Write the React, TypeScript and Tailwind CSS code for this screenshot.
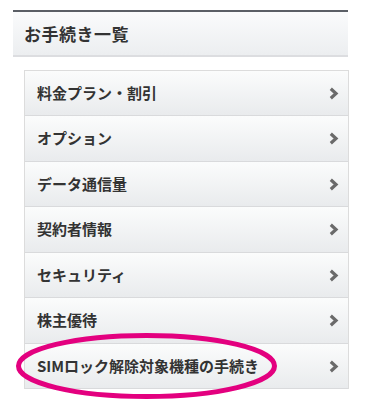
const items = [
  { label: "料金プラン・割引", h: "h-[45px]" },
  { label: "オプション", h: "h-[46px]" },
  { label: "データ通信量", h: "h-[45px]" },
  { label: "契約者情報", h: "h-[46px]" },
  { label: "セキュリティ", h: "h-[45px]" },
  { label: "株主優待", h: "h-[46px]" },
  { label: "SIMロック解除対象機種の手続き", h: "h-[45px]" },
];

const Chevron = () => (
  <svg width="11" height="13" viewBox="0 0 11 13" className="shrink-0">
    <polyline
      points="2.8,1.8 8,6.5 2.8,11.2"
      fill="none"
      stroke="#6a6a6a"
      strokeWidth="3.2"
      strokeLinejoin="miter"
    />
  </svg>
);

export default function App() {
  return (
    <div
      className="relative w-[375px] h-[400px] bg-white overflow-hidden"
      style={{ fontFamily: '"Noto Sans CJK JP", "Noto Sans", sans-serif' }}
    >
      <div className="pt-[10px] px-[13px] w-[361px]">
        <div className="h-[2px] bg-[#5b5f66]" />
        <div className="h-[45px] flex items-center pl-[11px] bg-gradient-to-b from-[#fafbfc] to-[#eceef0] border-b-2 border-[#dcdde0]">
          <span className="text-[17px] font-bold text-[#333] tracking-[0.5px]">
            お手続き一覧
          </span>
        </div>
      </div>

      <div className="mt-[13px] ml-[24px] w-[325px] border border-[#dcdcdc] border-b-0">
        {items.map(({ label, h }) => (
          <div
            key={label}
            className={`${h} flex items-center justify-between pl-[12px] pr-[9px] bg-gradient-to-b from-[#fbfcfc] to-[#e9ebed] border-b border-[#d9dadc]`}
          >
            <span className="text-[15px] font-bold text-[#333]">{label}</span>
            <Chevron />
          </div>
        ))}
      </div>

      <svg
        className="absolute left-0 top-0 pointer-events-none"
        width="375"
        height="400"
      >
        <ellipse
          cx="146.5"
          cy="366"
          rx="128"
          ry="30.5"
          fill="none"
          stroke="#e3007f"
          strokeWidth="5"
        />
      </svg>
    </div>
  );
}
